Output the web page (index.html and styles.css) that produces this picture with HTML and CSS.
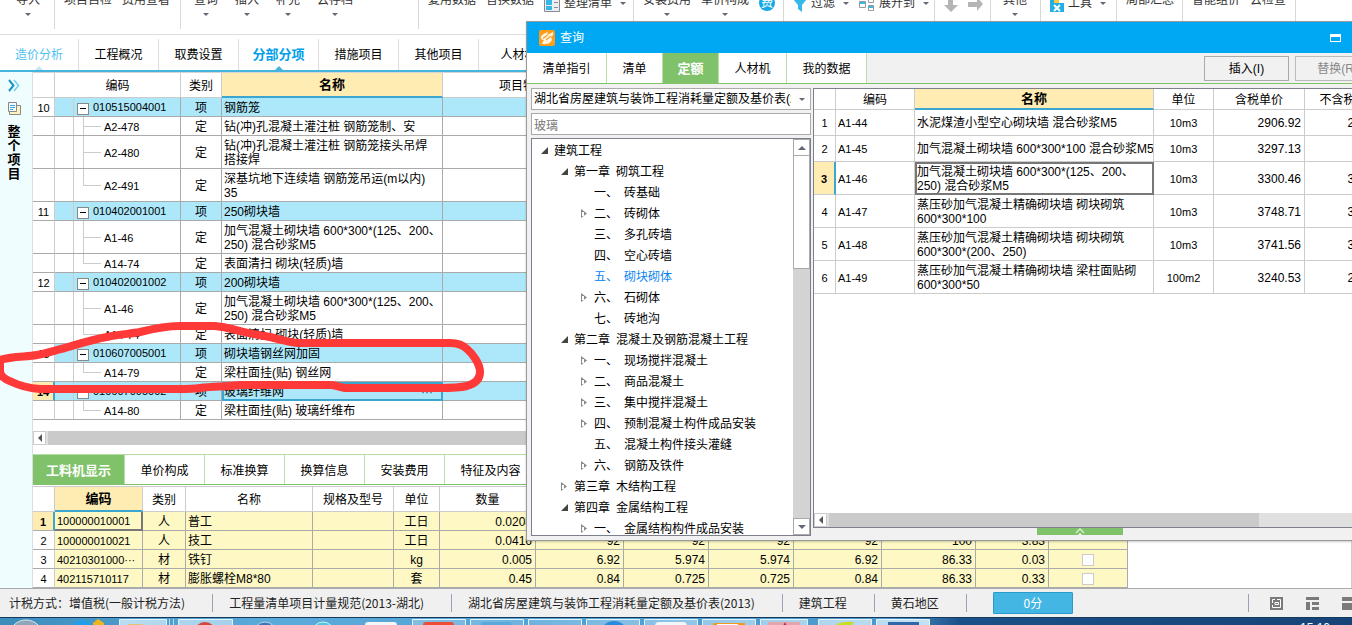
FILE: index.html
```html
<!DOCTYPE html>
<html lang="zh-CN">
<head>
<meta charset="utf-8">
<title>分部分项</title>
<link rel="stylesheet" href="styles.css">
</head>
<body>
<div class="app">
  <header class="ribbon">
    <div class="group g1"><button class="tool">导入<i class="caret"></i></button></div>
    <div class="group g2"><button class="tool">项目自检</button><button class="tool">费用查看</button></div>
    <div class="group g3"><button class="tool">查询<i class="caret"></i></button><button class="tool">插入<i class="caret"></i></button><button class="tool">补充<i class="caret"></i></button><button class="tool">云存档<i class="caret"></i></button></div>
    <div class="group g4"><button class="tool">复用数据</button><button class="tool">替换数据</button>
      <button class="tool low"><svg width="16" height="18" viewBox="0 0 16 18"><path d="M.5 0v17.500h15V0" fill="#eee" stroke="#889"/><path d="M2 2h6v3H2zM2 6h6v5H2zM2 12h6v4H2z" fill="#35b9ea"/><path d="M10 3h4v2h-4zM10 8h4v1h-4zM10 13h4v1h-4z" fill="#889"/></svg>整理清单<i class="caret"></i></button></div>
    <div class="group g5"><button class="tool">安装费用<i class="caret"></i></button><button class="tool">单价构成<i class="caret"></i></button><button class="tool low" aria-label="费"><span class="fee">费</span></button></div>
    <div class="group g6"><button class="tool low"><svg width="14" height="18" viewBox="0 0 14 18"><path d="M0 5h14L9 11v7l-4-3v-4z" fill="#35b9ea"/></svg>过滤<i class="caret"></i></button>
      <button class="tool low"><svg width="16" height="18" viewBox="0 0 16 18"><path d="M.5 7.500h6v6h-6zM9.500 3.500h5v5h-5zM9.500 11.500h5v5h-5z" fill="#fff" stroke="#999"/><path d="M1 8h5v2H1zM10 12h4v2h-4z" fill="#35b9ea"/></svg>展开到<i class="caret"></i></button></div>
    <div class="group g7"><button class="tool low" aria-label="下移"><svg width="14" height="18" viewBox="0 0 14 18"><path d="M4 0h5v11h5l-7 7-7-7h4z" fill="#b5b5b5"/></svg></button><button class="tool low" aria-label="右移"><svg width="16" height="18" viewBox="0 0 16 18"><path d="M0 8h9V3l6 7-6 7v-4H0z" fill="#b5b5b5"/></svg></button></div>
    <div class="group g8"><button class="tool">其他<i class="caret"></i></button></div>
    <div class="group g9"><button class="tool low"><svg width="14" height="18" viewBox="0 0 14 18"><path d="M0 0h14v18H0z" fill="#24aee8"/><path d="M4 3h5v6H4z" fill="#ffc93c"/><path d="M9 6h5v3H9z" fill="#fff"/><path d="m4 11 6 6M10 11l-6 6" stroke="#fff" stroke-width="2"/></svg>工具<i class="caret"></i></button></div>
    <div class="group g10"><button class="tool">局部汇总</button></div>
    <div class="group g11"><button class="tool">智能组价</button><button class="tool">云检查</button></div>
  </header>

  <nav class="tabs">
    <button class="tab analysis">造价分析</button><button class="tab">工程概况</button><button class="tab">取费设置</button><button class="tab active">分部分项</button><button class="tab">措施项目</button><button class="tab">其他项目</button><button class="tab">人材机</button>
  </nav>

  <div class="workspace">
    <aside class="side">
      <svg width="12" height="13" viewBox="0 0 12 13" fill="none"><path d="m1 1 4.500 5.500L1 12" stroke="#1e93c4" stroke-width="2"/><path d="m6 1 4.500 5.500L6 12" stroke="#6fd0f0" stroke-width="1.500"/></svg>
      <svg width="13" height="13" viewBox="0 0 13 13"><path d="M4.500 3.500h8v9h-11v-3z" fill="#fff3c0" stroke="#888"/><path d="M.5.5h8v9h-8z" fill="#f4fbff" stroke="#888"/><path d="M2 3.500h5M2 5.500h5M2 7.500h3" stroke="#35a9dc"/></svg>
      <span class="side-title">整个项目</span>
    </aside>

    <main class="content">
      <section class="list">
        <table class="grid items">
          <colgroup><col class="w-no"><col class="w-code"><col class="w-kind"><col class="w-name"><col class="w-feature"><col></colgroup>
          <thead><tr><th></th><th>编码</th><th>类别</th><th class="sorted">名称</th><th>项目特征</th><th></th></tr></thead>
          <tbody>
            <tr class="parent"><td class="no">10</td><td class="code"><button class="fold" aria-label="折叠"></button>010515004001</td><td>项</td><td class="name">钢筋笼</td><td></td><td></td></tr>
            <tr><td class="no"></td><td class="code child">A2-478</td><td>定</td><td class="name">钻(冲)孔混凝土灌注桩 钢筋笼制、安</td><td></td><td></td></tr>
            <tr class="tall"><td class="no"></td><td class="code child">A2-480</td><td>定</td><td class="name">钻(冲)孔混凝土灌注桩 钢筋笼接头吊焊<br>搭接焊</td><td></td><td></td></tr>
            <tr class="tall"><td class="no"></td><td class="code child last">A2-491</td><td>定</td><td class="name">深基坑地下连续墙 钢筋笼吊运(m以内)<br>35</td><td></td><td></td></tr>
            <tr class="parent"><td class="no">11</td><td class="code"><button class="fold" aria-label="折叠"></button>010402001001</td><td>项</td><td class="name">250砌块墙</td><td></td><td></td></tr>
            <tr class="tall"><td class="no"></td><td class="code child">A1-46</td><td>定</td><td class="name">加气混凝土砌块墙 600*300*(125、200、<br>250) 混合砂浆M5</td><td></td><td></td></tr>
            <tr><td class="no"></td><td class="code child last">A14-74</td><td>定</td><td class="name">表面清扫 砌块(轻质)墙</td><td></td><td></td></tr>
            <tr class="parent"><td class="no">12</td><td class="code"><button class="fold" aria-label="折叠"></button>010402001002</td><td>项</td><td class="name">200砌块墙</td><td></td><td></td></tr>
            <tr class="tall"><td class="no"></td><td class="code child">A1-46</td><td>定</td><td class="name">加气混凝土砌块墙 600*300*(125、200、<br>250) 混合砂浆M5</td><td></td><td></td></tr>
            <tr><td class="no"></td><td class="code child last">A14-74</td><td>定</td><td class="name">表面清扫 砌块(轻质)墙</td><td></td><td></td></tr>
            <tr class="parent"><td class="no">13</td><td class="code"><button class="fold" aria-label="折叠"></button>010607005001</td><td>项</td><td class="name">砌块墙钢丝网加固</td><td></td><td></td></tr>
            <tr><td class="no"></td><td class="code child last">A14-79</td><td>定</td><td class="name">梁柱面挂(贴) 钢丝网</td><td></td><td></td></tr>
            <tr class="parent"><td class="no current">14</td><td class="code"><button class="fold" aria-label="折叠"></button>010607005002</td><td>项</td><td class="name editing"><div class="edit"><span>玻璃纤维网</span><button class="more" aria-label="更多">···</button></div></td><td></td><td></td></tr>
            <tr><td class="no"></td><td class="code child last">A14-80</td><td>定</td><td class="name">梁柱面挂(贴) 玻璃纤维布</td><td></td><td></td></tr>
          </tbody>
        </table>
      </section>
      <div class="hscroll"><button class="sbtn" aria-label="向左"><i class="tri left"></i></button><div class="thumb"></div></div>

      <nav class="subtabs">
        <button class="subtab active">工料机显示</button><button class="subtab">单价构成</button><button class="subtab">标准换算</button><button class="subtab">换算信息</button><button class="subtab">安装费用</button><button class="subtab wide">特征及内容</button>
      </nav>
      <section class="detail">
        <table class="grid resources">
          <colgroup><col style="width:22px"><col style="width:88px"><col style="width:43px"><col style="width:127px"><col style="width:81px"><col style="width:46px"><col style="width:96px"><col style="width:88px"><col style="width:85px"><col style="width:85px"><col style="width:88px"><col style="width:94px"><col style="width:73px"><col style="width:79px"></colgroup>
          <thead><tr><th></th><th class="sorted">编码</th><th>类别</th><th>名称</th><th>规格及型号</th><th>单位</th><th>数量</th><th></th><th></th><th></th><th></th><th></th><th></th><th></th></tr></thead>
          <tbody>
            <tr><td class="no current">1</td><td class="rcode picked">100000010001</td><td>人</td><td class="name">普工</td><td></td><td>工日</td><td class="num">0.0208</td><td></td><td></td><td></td><td></td><td></td><td></td><td></td></tr>
            <tr><td class="no">2</td><td class="rcode">100000010021</td><td>人</td><td class="name">技工</td><td></td><td>工日</td><td class="num">0.0416</td><td class="num">92</td><td class="num">92</td><td class="num">92</td><td class="num">92</td><td class="num">100</td><td class="num">3.83</td><td></td></tr>
            <tr><td class="no">3</td><td class="rcode">40210301000···</td><td>材</td><td class="name">铁钉</td><td></td><td>kg</td><td class="num">0.005</td><td class="num">6.92</td><td class="num">5.974</td><td class="num">5.974</td><td class="num">6.92</td><td class="num">86.33</td><td class="num">0.03</td><td><input type="checkbox" aria-label="铁钉"></td></tr>
            <tr><td class="no">4</td><td class="rcode">402115710117</td><td>材</td><td class="name">膨胀螺栓M8*80</td><td></td><td>套</td><td class="num">0.45</td><td class="num">0.84</td><td class="num">0.725</td><td class="num">0.725</td><td class="num">0.84</td><td class="num">86.33</td><td class="num">0.33</td><td><input type="checkbox" aria-label="膨胀螺栓"></td></tr>
          </tbody>
        </table>
      </section>
    </main>
  </div>

  <footer class="status">
    <span class="seg first">计税方式：增值税(一般计税方法)</span><span class="seg">工程量清单项目计量规范(2013-湖北)</span><span class="seg">湖北省房屋建筑与装饰工程消耗量定额及基价表(2013)</span><span class="seg">建筑工程</span><span class="seg">黄石地区</span>
    <button class="score">0分</button>
    <div class="views">
      <button aria-label="适应"><svg width="13" height="13" viewBox="0 0 13 13"><path d="M0 0h13v13H0z" fill="#7a7a7a"/><path d="M2.500 6V2.500H5M7 2.500h3.500V10.500H2.500V8M5 5.500h3.500v2H5z" fill="none" stroke="#fff"/></svg></button>
      <button aria-label="分栏"><svg width="13" height="13" viewBox="0 0 13 13"><path d="M0 0h13v3H0zM0 5h4v8H0zM6 5h7v3H6zM6 10h7v3H6z" fill="#7a7a7a"/></svg></button>
      <button aria-label="上下"><svg width="13" height="13" viewBox="0 0 13 13"><path d="M0 0h13v4H0zM0 6h13v7H0z" fill="#7a7a7a"/></svg></button>
    </div>
  </footer>

  <div class="taskbar">
    <svg width="932" height="8" viewBox="0 0 932 8">
      <defs><linearGradient id="btn" x1="0" y1="0" x2="1" y2="0"><stop offset="0" stop-color="#b9dcf0"/><stop offset=".5" stop-color="#6db3dd"/><stop offset="1" stop-color="#c5e2f2"/></linearGradient></defs>
      <circle cx="26" cy="19" r="17" fill="#8fa6b8" stroke="#dce8ef"/>
      <circle cx="82" cy="14" r="12" fill="#219ee8"/><path d="m98 1 6 4v3H93V5z" fill="#f0b41c"/>
      <g fill="url(#btn)" stroke="#e4f3fb"><path d="M119.500 9V1.500h47V9M178.500 9V1.500h54V9M412.500 9V1.500h53V9M470.500 9V1.500h53V9M528.500 9V1.500h53V9M586.500 9V1.500h53V9M644.500 9V1.500h53V9M702.500 9V1.500h53V9M760.500 9V1.500h47V9M818.500 9V1.500h53V9M876.500 9V1.500h53V9"/></g>
      <path d="M128 8V6h15v2z" fill="#e4c27a"/><path d="M169.500 1v7M173.500 1v7" stroke="#b5dcf0"/>
      <circle cx="205" cy="15" r="11" fill="#d8453c"/>
      <circle cx="265" cy="15" r="11" fill="#3c78b8" stroke="#b8d4e8"/><circle cx="323" cy="15" r="11" fill="#4cc8e0" stroke="#c8f0f4"/>
      <rect x="365" y="4" width="32" height="9" rx="3" fill="#f4f6fa"/>
      <rect x="423" y="4" width="31" height="9" rx="3" fill="#ee4d38"/><rect x="481" y="4" width="31" height="9" rx="3" fill="#5aa9dc"/>
      <circle cx="614" cy="17" r="14" fill="#288cdc"/><rect x="655" y="4" width="32" height="9" rx="4" fill="#f2f6f9"/>
      <path d="M713 8V5h32v3z" fill="#f29a1e"/><path d="M717 8V6h21v2z" fill="#fff"/><path d="M768 4h32v4h-32z" fill="#e3a5ad"/><path d="m783 8 2-4 2 4z" fill="#c83040"/>
      <path d="M834 8q6-5 20-4l-3 4z" fill="#c8dc28"/><path d="M888 4h31v4h-31z" fill="#2f68aa"/>
    </svg>
    <time class="clock">15:10</time>
  </div>

  <svg class="markup" width="486" height="74" viewBox="0 0 486 74" fill="none" aria-hidden="true"><path d="M0 38C12 34 26 35 37 33C48 31 56 28 65 26C82 21 94 17 107 15C120 12 130 12 140 10C156 6 168 4 180 4H215C228 5 234 8 240 9C250 12 260 13 270 15C282 18 288 20 298 21H450C458 21 463 23 467 27C473 32 480 42 480 50C480 58 474 62 467 64C458 66 448 66 440 66H345C336 64 334 63 330 63H240C226 65 214 64 200 66C192 67 186 67 180 67H40C28 66 20 64 12 60C4 57 0 54 0 49Z" stroke="#ff3838" stroke-width="8"/></svg>

  <section class="dialog" role="dialog" aria-label="查询">
    <header class="titlebar">
      <svg width="16" height="16" viewBox="0 0 16 16"><rect width="16" height="16" rx="2" fill="#ff9c1a"/><path d="M2 6Q5 3 9 2L8 5l6-3q1 3-2 5l1 3q-2 4-6 4-4 1-4-1l2-3q-4 0-3-4z" fill="#fff3dc"/><path d="M4 8.500 8.500 5M7 10l5-4" stroke="#f4a333" stroke-width="1.200"/></svg>
      <h1>查询</h1>
      <button class="max" aria-label="最大化"></button>
    </header>
    <div class="dtabs">
      <button class="dtab">清单指引</button><button class="dtab short">清单</button><button class="dtab short active">定额</button><button class="dtab mid">人材机</button><button class="dtab">我的数据</button>
      <div class="actions"><button class="action">插入(I)</button><button class="action" disabled>替换(R)</button></div>
    </div>
    <div class="dbody">
      <div class="picker">
        <label class="combo"><select aria-label="定额库"><option>湖北省房屋建筑与装饰工程消耗量定额及基价表(2013)</option></select><i class="caret"></i></label>
        <input class="search" type="text" value="玻璃" aria-label="搜索">
        <div class="treebox">
          <ul class="tree">
            <li class="l1 open">建筑工程</li>
            <li class="l2 open"><b>第一章</b>砌筑工程</li>
            <li class="l3"><b>一、</b>砖基础</li>
            <li class="l3 shut"><b>二、</b>砖砌体</li>
            <li class="l3"><b>三、</b>多孔砖墙</li>
            <li class="l3"><b>四、</b>空心砖墙</li>
            <li class="l3 chosen"><b>五、</b>砌块砌体</li>
            <li class="l3 shut"><b>六、</b>石砌体</li>
            <li class="l3"><b>七、</b>砖地沟</li>
            <li class="l2 open"><b>第二章</b>混凝土及钢筋混凝土工程</li>
            <li class="l3 shut"><b>一、</b>现场搅拌混凝土</li>
            <li class="l3 shut"><b>二、</b>商品混凝土</li>
            <li class="l3 shut"><b>三、</b>集中搅拌混凝土</li>
            <li class="l3 shut"><b>四、</b>预制混凝土构件成品安装</li>
            <li class="l3"><b>五、</b>混凝土构件接头灌缝</li>
            <li class="l3 shut"><b>六、</b>钢筋及铁件</li>
            <li class="l2 shut"><b>第三章</b>木结构工程</li>
            <li class="l2 open"><b>第四章</b>金属结构工程</li>
            <li class="l3 shut"><b>一、</b>金属结构构件成品安装</li>
          </ul>
          <div class="vscroll"><button class="vbtn" aria-label="向上"><i class="tri up"></i></button><div class="vthumb"></div><button class="vbtn end" aria-label="向下"><i class="tri down"></i></button></div>
        </div>
      </div>
      <div class="result">
        <div class="rbox">
          <div class="rtable">
            <table class="grid quotas">
              <colgroup><col style="width:22px"><col style="width:79px"><col style="width:239px"><col style="width:60px"><col style="width:91px"><col style="width:90px"></colgroup>
              <thead><tr><th></th><th>编码</th><th class="sorted">名称</th><th>单位</th><th>含税单价</th><th>不含税单价</th></tr></thead>
              <tbody>
                <tr><td class="no">1</td><td class="rcode">A1-44</td><td class="name">水泥煤渣小型空心砌块墙 混合砂浆M5</td><td class="unit">10m3</td><td class="num">2906.92</td><td class="num">2831.40</td></tr>
                <tr><td class="no">2</td><td class="rcode">A1-45</td><td class="name">加气混凝土砌块墙 600*300*100 混合砂浆M5</td><td class="unit">10m3</td><td class="num">3297.13</td><td class="num"></td></tr>
                <tr class="tall"><td class="no current">3</td><td class="rcode">A1-46</td><td class="name boxed">加气混凝土砌块墙 600*300*(125、200、<br>250) 混合砂浆M5</td><td class="unit">10m3</td><td class="num">3300.46</td><td class="num">3012.55</td></tr>
                <tr class="tall"><td class="no">4</td><td class="rcode">A1-47</td><td class="name">蒸压砂加气混凝土精确砌块墙 砌块砌筑<br>600*300*100</td><td class="unit">10m3</td><td class="num">3748.71</td><td class="num">3388.82</td></tr>
                <tr class="tall"><td class="no">5</td><td class="rcode">A1-48</td><td class="name">蒸压砂加气混凝土精确砌块墙 砌块砌筑<br>600*300*(200、250)</td><td class="unit">10m3</td><td class="num">3741.56</td><td class="num">3381.67</td></tr>
                <tr class="tall"><td class="no">6</td><td class="rcode">A1-49</td><td class="name">蒸压砂加气混凝土精确砌块墙 梁柱面贴砌<br>600*300*50</td><td class="unit">100m2</td><td class="num">3240.53</td><td class="num">2974.21</td></tr>
              </tbody>
            </table>
          </div>
          <div class="hscroll inner"><button class="sbtn" aria-label="向左"><i class="tri left"></i></button><div class="thumb part"></div></div>
        </div>
        <button class="drawer" aria-label="展开"><svg width="10" height="8" viewBox="0 0 10 8" fill="none"><path d="m1 5 4-4 4 4" stroke="#d7f0cc" stroke-width="1.500"/><path d="m2 8 3-3 3 3z" fill="#fff"/></svg></button>
      </div>
    </div>
  </section>
</div>
</body>
</html>
```
FILE: styles.css
```css
* { box-sizing: border-box; }
body { margin: 0; font: 12px/14px "Liberation Sans", "Noto Sans CJK SC", sans-serif; color: #000; background: #fff; }
button { font: inherit; color: inherit; background: none; border: 0; padding: 0; margin: 0; white-space: nowrap; }
svg { display: block; flex: none; }
.app { position: relative; height: 100vh; display: flex; flex-direction: column; overflow: hidden; }

.ribbon { flex: none; height: 35px; display: flex; overflow: hidden; border-bottom: 1px solid #ddd; color: #333; }
.group { flex: none; height: 29px; display: flex; align-items: flex-start; gap: 10px; padding-left: 9px; border-right: 1px solid #d8d8d8; }
.g1 { width: 55px; padding-left: 16px; }
.g2 { width: 126px; }
.g3 { width: 238px; padding-left: 13px; gap: 17px; }
.g4 { width: 215px; }
.g5 { width: 150px; }
.g6 { width: 151px; }
.g7 { width: 56px; }
.g8 { width: 50px; padding-left: 12px; }
.g9 { width: 76px; }
.g10 { width: 66px; }
.g11 { width: 113px; }
.tool { display: flex; flex-direction: column; align-items: center; gap: 6px; margin-top: -7px; line-height: 14px; }
.tool.low { flex-direction: row; gap: 4px; height: 20px; line-height: 20px; }
.caret { flex: none; width: 0; height: 0; border: 3px solid transparent; border-top-color: #667; border-bottom: 0; }
.tool.low .caret { margin: 0 0 0 4px; }
.fee { width: 16px; height: 16px; border-radius: 8px; background: #16a9e6; color: #fff; line-height: 16px; text-align: center; }

.tabs { flex: none; height: 37px; display: flex; padding-top: 4px; border-bottom: 2px solid #45b5e0; }
.tab { position: relative; flex: none; width: 80px; padding-top: 1px; border-right: 1px solid #ddd; }
.tab.analysis { width: 79px; color: #4fc3f0; }
.tab.active { color: #00a0e9; font-size: 13px; font-weight: bold; }
.tab.active::after, .tab.analysis::after { content: ""; position: absolute; left: 50%; bottom: 0; margin-left: -4px; border: 4px solid transparent; border-top: 0; border-bottom-color: #45b5e0; }
.tab.analysis::after { border-bottom-color: #c4e8f5; }

.workspace { flex: 1; min-height: 0; display: flex; }
.side { flex: none; width: 33px; display: flex; flex-direction: column; align-items: center; gap: 10px; padding: 7px 4px 0 0; background: #f0fdff; border-right: 1px solid #ddd; }
.side-title { width: 13px; font-size: 13px; font-weight: bold; text-align: center; word-break: break-all; }
.content { flex: 1; min-width: 0; display: flex; flex-direction: column; }
.list { flex: 1; min-height: 0; overflow: hidden; border-top: 1px solid #d5d5d5; }

.grid { border-collapse: separate; border-spacing: 0; table-layout: fixed; }
.grid th, .grid td { padding: 1px 0 0; border-right: 1px solid #aaa; border-bottom: 1px solid #aaa; text-align: center; white-space: nowrap; overflow: hidden; font-weight: normal; }
.grid th { border-color: #ccc; }
.grid th.sorted { background: #ffecb3; font-weight: bold; border-bottom: 2px solid #3ba6d0; font-size: 13px; }
.grid td { height: 19px; }
.grid .tall td { height: 33px; }
.grid td.name { text-align: left; padding-left: 2px; }
.grid td.no { background: #fff; border-right-color: #ccc; font-size: 11px; }
.grid td.no.current { background: #ffecb3; font-weight: bold; border-right: 2px solid #3ba6d0; }
.grid td.rcode { font-size: 11px; text-align: left; padding-left: 2px; }
.grid td.num { text-align: right; padding-right: 3px; }

.items { width: 100%; }
.items th { height: 25px; }
.w-no { width: 22px; }
.w-code { width: 126px; }
.w-kind { width: 41px; }
.w-name { width: 221px; }
.w-feature { width: 161px; }
.parent td { background: #ace8fa; }
.grid td.code { padding-left: 22px; text-align: left; font-size: 11px; background-image: linear-gradient(#ccc, #ccc); background-position: 18px 0; background-size: 1px 100%; background-repeat: no-repeat; }
.grid td.code.child { padding-left: 49px; background-image: linear-gradient(#ccc, #ccc), linear-gradient(#ccc, #ccc), linear-gradient(#ccc, #ccc); background-position: 18px 0, 28px 0, 28px 50%; background-size: 1px 100%, 1px 100%, 18px 1px; }
.grid td.code.last { background-size: 1px 100%, 1px 50%, 18px 1px; }
.fold { width: 12px; height: 12px; margin-right: 4px; border: 1px solid #888; background: linear-gradient(#000, #000) center / 6px 1px no-repeat #fff; vertical-align: middle; }
.grid td.editing { border: 2px solid #3ba6d0; padding: 0; }
.edit { display: flex; justify-content: space-between; padding-right: 8px; }
.more { color: #456; line-height: 10px; }

.hscroll { flex: none; height: 14px; display: flex; gap: 2px; background: #e0e0e0; margin-bottom: 9px; }
.sbtn { width: 13px; background: #fff; border: 1px solid #ccc; display: flex; align-items: center; justify-content: center; }
.thumb { flex: 1; background: #cacaca; }
.tri { width: 0; height: 0; border: 4px solid transparent; }
.tri.left { border-right-color: #555; border-left: 0; }
.tri.up { border-bottom-color: #667; border-top: 0; }
.tri.down { border-top-color: #667; border-bottom: 0; }

.subtabs { flex: none; height: 31px; display: flex; border-top: 1px solid #b5dfa5; border-bottom: 1px solid #7fc268; }
.subtab { flex: none; width: 80px; padding-top: 2px; border-right: 1px solid #b5dfa5; }
.subtab.wide { width: 92px; }
.subtab.active { width: 92px; background: #80c269; color: #fff; font-size: 13px; font-weight: bold; }
.detail { flex: none; overflow: hidden; padding-top: 1px; border-right: 1px solid #ccc; }
.resources { width: 1095px; border-top: 1px solid #ccc; }
.resources th { height: 25px; }
.resources td { background: #fdf8c4; }
.grid td.picked { border: 1px solid #777; border-width: 0 2px 2px 0; }
.resources input { appearance: none; display: block; width: 12px; height: 12px; margin: 0 auto; border: 1px solid #ccc; background: #fff; }

.status { flex: none; height: 29px; display: flex; align-items: center; border-top: 1px solid #aaa; background: #f0f0f0; font-family: "Noto Sans CJK SC", sans-serif; color: #222; overflow: hidden; }
.seg { flex: none; padding: 0 27px 0 16px; line-height: 18px; border-right: 1px solid #9aa3b5; white-space: nowrap; }
.seg.first { padding-left: 9px; }
.score { flex: none; width: 80px; height: 22px; margin-left: 26px; background: #43b6e4; border: 1px solid #2a9aca; border-radius: 1px; color: #fff; }
.views { flex: none; display: flex; align-items: center; gap: 23px; height: 18px; margin-left: auto; margin-right: -3px; padding-left: 21px; border-left: 1px solid #9aa3b5; }

.taskbar { flex: none; height: 8px; display: flex; justify-content: space-between; overflow: hidden; background: linear-gradient(90deg, #3c8cbc, #5aabdb 20%, #4a98cc 66%, #1a5088 71%, #174478); border-top: 1px solid #143a5c; }
.clock { padding: 3px 22px 0 0; color: #fff; }

.markup { position: absolute; left: 0; top: 322px; }

.dialog { position: absolute; left: 526px; right: 0; top: 21px; bottom: 84px; display: flex; flex-direction: column; background: #f1f1f1; border: 1px solid #999; border-right: 0; box-shadow: 0 1px 2px #0003; }
.titlebar { flex: none; height: 31px; display: flex; align-items: center; gap: 5px; padding: 0 11px 0 12px; background: #00a8f3; color: #fff; }
.titlebar h1 { flex: 1; margin: 0; font-size: 12px; font-weight: normal; }
.max { width: 11px; height: 8px; border: 1px solid #fff; border-top-width: 3px; }
.dtabs { flex: none; height: 31px; display: flex; border-bottom: 1px solid #80c269; overflow: hidden; }
.dtab { flex: none; width: 80px; padding-top: 2px; background: #fff; border-right: 1px solid #b5e3a5; }
.dtab.short { width: 56px; }
.dtab.mid { width: 68px; }
.dtab.active { background: #80c269; color: #fff; font-size: 13px; font-weight: bold; }
.actions { flex: none; display: flex; gap: 6px; margin: 3px -28px 2px auto; }
.action { width: 85px; border: 1px solid #aaa; }
.action:disabled { color: #888; border-color: #bbb; }
.dbody { flex: 1; min-height: 0; display: flex; gap: 2px; padding: 4px 0 0 4px; }
.picker { flex: none; width: 280px; display: flex; flex-direction: column; gap: 3px; padding-bottom: 4px; }
.combo { flex: none; height: 22px; display: flex; align-items: center; padding-right: 5px; background: #fff; border: 1px solid #aaa; }
.combo select { appearance: none; flex: 1; min-width: 0; height: 20px; margin-right: 8px; padding: 0 0 0 2px; border: 0; background: none; font: inherit; overflow: hidden; }
.search { flex: none; height: 22px; padding: 0 2px; border: 1px solid #aaa; border-radius: 0; font: inherit; color: #777; background: #fff; }
.treebox { flex: 1; min-height: 0; display: flex; background: #fff; border: 1px solid #7c808c; overflow: hidden; }
.tree { flex: 1; margin: 0; padding: 1px 0 0; list-style: none; }
.tree li { display: flex; align-items: center; height: 21px; white-space: nowrap; }
.tree b { font-weight: normal; margin-right: 6px; }
.tree li::before { content: ""; width: 7px; height: 7px; margin-right: 6px; }
.tree .open::before { background: #444; clip-path: polygon(100% 0, 100% 100%, 0 100%); }
.tree .shut::before { width: 6px; height: 9px; margin-right: 7px; background: linear-gradient(#fff, #fff) 1px 50% / 2px 4px no-repeat #888; clip-path: polygon(0 0, 100% 50%, 0 100%); }
.l1 { padding-left: 9px; }
.l2 { padding-left: 29px; }
.l3 { padding-left: 49px; }
.chosen { color: #0a84f0; }
.vscroll { flex: none; width: 17px; display: flex; flex-direction: column; background: #d3d3d3; }
.vbtn { flex: none; height: 17px; display: flex; align-items: center; justify-content: center; background: #fff; border: 1px solid #aaa; }
.vbtn.end { margin-top: auto; }
.vthumb { height: 113px; background: #fff; border: 1px solid #aaa; border-top: 0; }
.result { flex: 1; min-width: 0; display: flex; flex-direction: column; }
.rbox { flex: 1; min-height: 0; display: flex; flex-direction: column; background: #fff; border: 1px solid #7c808c; border-right: 0; }
.rtable { flex: 1; min-height: 0; overflow: hidden; }
.quotas { width: 581px; }
.quotas th { height: 21px; }
.grid.quotas td { height: 26px; border-color: #ccc; }
.grid.quotas .tall td { height: 33px; }
.grid.quotas td.current { border-right-color: #3ba6d0; }
.grid.quotas td.unit { font-size: 11px; }
.grid.quotas td.boxed { border: 2px solid #777; padding: 0; }
.hscroll.inner { margin: 0; }
.hscroll .part { flex: none; width: 80%; }
.drawer { flex: none; width: 86px; height: 7px; margin: 0 0 5px 224px; background: #80c269; display: flex; justify-content: center; overflow: hidden; }
```
